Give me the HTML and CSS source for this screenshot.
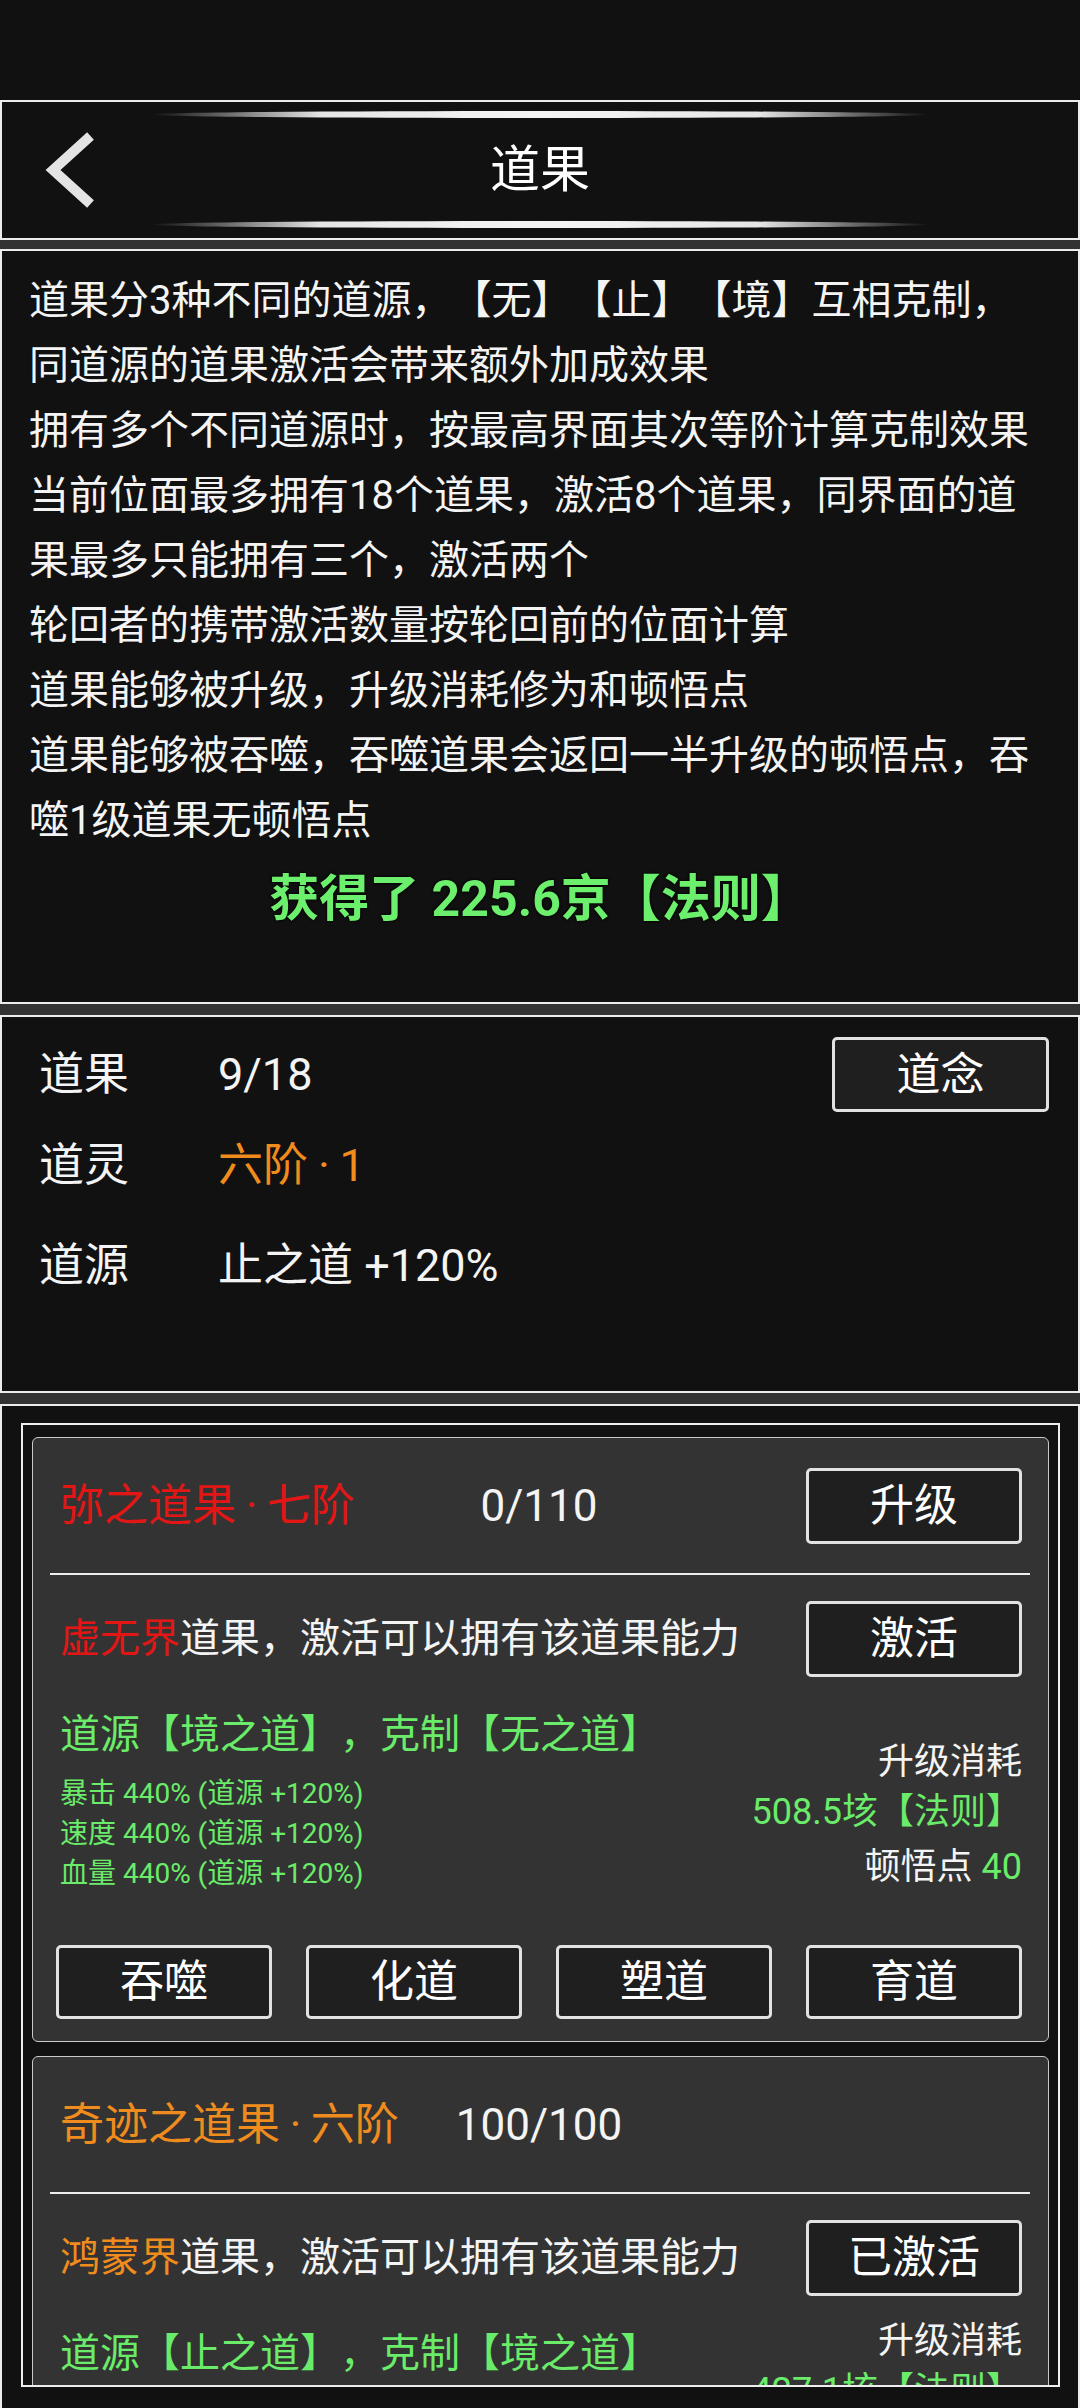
FILE: index.html
```html
<!DOCTYPE html>
<html lang="zh-CN">
<head>
<meta charset="utf-8">
<title>道果</title>
<link rel="stylesheet" href="styles.css">
</head>
<body>
<div class="status"></div>

<header class="panel header">
  <div class="deco"></div>
  <div class="hrow">
    <svg class="back" width="60" height="90" viewBox="0 0 60 90" aria-label="返回">
      <polyline points="50.5,11 13,45 50.5,79" fill="none" stroke="#e4e4e4" stroke-width="10" stroke-linejoin="miter" stroke-linecap="butt"/>
    </svg>
    <h1 class="title">道果</h1>
    <span></span>
  </div>
  <div class="deco"></div>
</header>

<section class="panel intro">
  <p>道果分3种不同的道源，【无】【止】【境】互相克制，<br>同道源的道果激活会带来额外加成效果</p>
  <p>拥有多个不同道源时，按最高界面其次等阶计算克制效果</p>
  <p>当前位面最多拥有18个道果，激活8个道果，同界面的道<br>果最多只能拥有三个，激活两个</p>
  <p>轮回者的携带激活数量按轮回前的位面计算</p>
  <p>道果能够被升级，升级消耗修为和顿悟点</p>
  <p>道果能够被吞噬，吞噬道果会返回一半升级的顿悟点，吞<br>噬1级道果无顿悟点</p>
  <p class="intro-sum">获得了 225.6京【法则】</p>
</section>

<section class="panel stats">
  <div class="stat-row first">
    <span class="stat-label">道果</span>
    <span class="stat-value">9/18</span>
    <button class="btn stat-btn">道念</button>
  </div>
  <div class="stat-row second">
    <span class="stat-label">道灵</span>
    <span class="stat-value orange">六阶<span class="dot">·</span>1</span>
  </div>
  <div class="stat-row third">
    <span class="stat-label">道源</span>
    <span class="stat-value">止之道 +120%</span>
  </div>
</section>

<section class="panel list">
  <div class="frame">
    <article class="card">
      <div class="c-head">
        <span class="c-title red">弥之道果<span class="dot">·</span>七阶</span>
        <span class="c-count">0/110</span>
        <button class="btn">升级</button>
      </div>
      <div class="sep"></div>
      <div class="c-row">
        <span class="c-desc"><span class="red">虚无界</span>道果，激活可以拥有该道果能力</span>
        <button class="btn">激活</button>
      </div>
      <div class="c-body">
        <div class="c-left">
          <div class="c-source green">道源【境之道】，克制【无之道】</div>
          <div class="c-stats green">
            <div>暴击 440% (道源 +120%)</div>
            <div>速度 440% (道源 +120%)</div>
            <div>血量 440% (道源 +120%)</div>
          </div>
        </div>
        <div class="c-cost">
          <div>升级消耗</div>
          <div class="green">508.5垓【法则】</div>
          <div class="pts">顿悟点 <span class="green">40</span></div>
        </div>
      </div>
      <div class="c-actions">
        <button class="btn">吞噬</button>
        <button class="btn">化道</button>
        <button class="btn">塑道</button>
        <button class="btn">育道</button>
      </div>
    </article>

    <article class="card card-active">
      <div class="c-head">
        <span class="c-title orange">奇迹之道果<span class="dot">·</span>六阶</span>
        <span class="c-count">100/100</span>
        <span></span>
      </div>
      <div class="sep"></div>
      <div class="c-row">
        <span class="c-desc"><span class="orange">鸿蒙界</span>道果，激活可以拥有该道果能力</span>
        <button class="btn">已激活</button>
      </div>
      <div class="c-body">
        <div class="c-left">
          <div class="c-source green">道源【止之道】，克制【境之道】</div>
        </div>
        <div class="c-cost">
          <div>升级消耗</div>
          <div class="green">427.1垓【法则】</div>
        </div>
      </div>
    </article>
  </div>
</section>
</body>
</html>
```

FILE: styles.css
```css
* {
  box-sizing: border-box;
}

html,
body {
  margin: 0;
  padding: 0;
}

body {
  width: 1080px;
  height: 2408px;
  overflow: hidden;
  background: #333333;
  color: #f4f4f4;
  font-family: Roboto, "Noto Sans CJK SC", sans-serif;
  text-spacing-trim: space-all;
}

p,
h1 {
  margin: 0;
}

.red {
  color: #e31616;
}

.orange {
  color: #f08b1e;
}

.green {
  color: #6aec6a;
}

.dot {
  display: inline-block;
  width: 0.7em;
  text-align: center;
}

.status {
  height: 100px;
  background: #111111;
}

.panel {
  background: #111111;
  border: 2px solid #ececec;
}

/* header */
.header {
  height: 140px;
  display: flex;
  flex-direction: column;
  align-items: center;
}

.deco {
  flex: none;
  width: 780px;
  height: 7px;
  margin-top: 9px;
  border-radius: 50%;
  background: linear-gradient(90deg, rgba(255, 255, 255, 0) 0%, rgba(255, 255, 255, 0.3) 8%, #e6e6e6 22%, #f4f4f4 50%, #e6e6e6 78%, rgba(255, 255, 255, 0.3) 92%, rgba(255, 255, 255, 0) 100%);
}

.hrow + .deco {
  margin-top: 0;
  margin-bottom: 10px;
}

.hrow {
  flex: 1;
  width: 100%;
  display: grid;
  grid-template-columns: 1fr auto 1fr;
  align-items: center;
}

.back {
  display: block;
  margin-left: 38px;
}

.title {
  font-size: 50px;
  font-weight: normal;
  line-height: 60px;
  color: #ffffff;
}

/* intro */
.intro {
  height: 755px;
  margin-top: 9px;
  padding: 17px 27px 0;
  font-size: 40px;
  line-height: 65px;
}

.intro p {
  white-space: nowrap;
}

.intro .intro-sum {
  margin-top: 14px;
  text-align: center;
  font-size: 50px;
  font-weight: bold;
  color: #6cef6c;
  text-shadow: 0 0 3px #000000, 0 0 2px #000000;
}

/* buttons */
.btn {
  font-family: inherit;
  font-size: 44px;
  color: #ffffff;
  background: #1f1f1f;
  border: 3px solid #e2e2e2;
  border-radius: 5px;
  width: 216px;
  height: 76px;
  padding: 0;
  line-height: 1;
  display: flex;
  align-items: center;
  justify-content: center;
}

/* stats */
.stats {
  height: 378px;
  margin-top: 11px;
  padding: 20px 29px 0 37px;
}

.stat-row {
  display: flex;
  align-items: center;
  height: 60px;
  font-size: 45px;
  line-height: 60px;
}

.stat-row.first {
  height: 75px;
}

.stat-row.second {
  margin-top: 24px;
}

.stat-row.third {
  margin-top: 40px;
}

.stat-label {
  width: 179px;
  flex: none;
}

.stat-btn {
  margin-left: auto;
  width: 217px;
  height: 75px;
  font-size: 44px;
}

/* list */
.list {
  height: 1030px;
  margin-top: 11px;
  padding: 17px 18px 0 19px;
}

.frame {
  height: 964px;
  overflow: hidden;
  border: 2px solid #eeeeee;
  padding: 12px 9px 0;
}

.card {
  background: #333333;
  border: 1px solid #c9c9c9;
  border-radius: 6px;
  padding: 0 26px 22px 23px;
}

.card + .card {
  margin-top: 14px;
}

.c-head {
  height: 135px;
  display: grid;
  grid-template-columns: 1fr auto 1fr;
  align-items: center;
  font-size: 44px;
  line-height: 60px;
}

.c-head .btn {
  justify-self: end;
}

.c-title {
  padding-left: 4px;
  white-space: nowrap;
}

.sep {
  height: 2px;
  margin: 0 -8px 0 -6px;
  background: #eeeeee;
}

.c-row {
  display: flex;
  align-items: center;
  justify-content: space-between;
  padding-top: 26px;
}

.c-desc {
  padding-left: 4px;
  font-size: 40px;
  line-height: 50px;
  white-space: nowrap;
}

.c-body {
  display: flex;
  justify-content: space-between;
  align-items: flex-start;
  margin-top: 33px;
}

.c-left {
  padding-left: 4px;
}

.c-source {
  font-size: 40px;
  line-height: 50px;
  white-space: nowrap;
}

.c-stats {
  margin-top: 14px;
  font-size: 28px;
  line-height: 40px;
  white-space: nowrap;
}

.c-cost {
  margin-top: 27px;
  text-align: right;
  font-size: 36px;
  line-height: 50px;
  white-space: nowrap;
}

.card-active .c-cost {
  margin-top: -13px;
}

.c-cost .pts {
  margin-top: 5px;
}

.c-actions {
  display: grid;
  grid-template-columns: repeat(4, 1fr);
  gap: 34px;
  margin-top: 51px;
}

.c-actions .btn {
  width: auto;
  height: 74px;
}
```
